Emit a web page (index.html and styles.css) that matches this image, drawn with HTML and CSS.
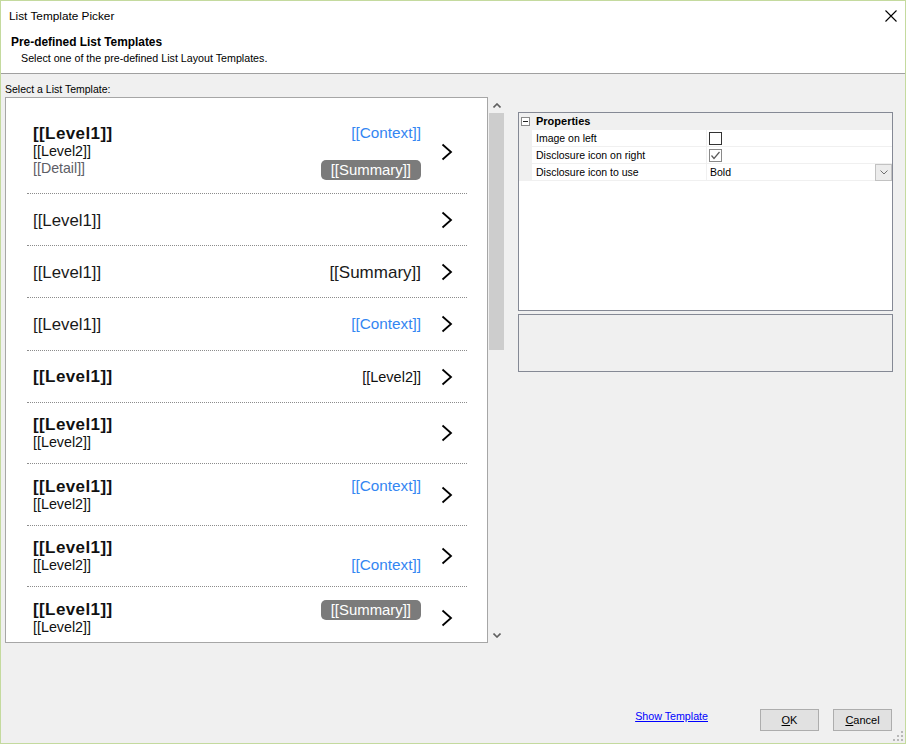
FILE: index.html
```html
<!DOCTYPE html>
<html>
<head>
<meta charset="utf-8">
<title>List Template Picker</title>
<link rel="stylesheet" href="styles.css">
</head>
<body>
<div class="window">
  <div class="top">
    <div class="titlebar">
      <span class="title">List Template Picker</span>
      <svg class="close" width="12" height="12" viewBox="0 0 12 12"><path d="M0.5 0.5 L11.5 11.5 M11.5 0.5 L0.5 11.5" stroke="#000" stroke-width="1.1" fill="none"/></svg>
    </div>
    <div class="header">
      <div class="h-title">Pre-defined List Templates</div>
      <div class="h-sub">Select one of the pre-defined List Layout Templates.</div>
    </div>
  </div>

  <div class="main">
    <div class="left-pane">
      <div class="label">Select a List Template:</div>
      <div class="list-wrap">
        <div class="listbox">
          <div class="item h83">
            <div class="body">
              <div class="left">
                <div class="l1b">[[Level1]]</div>
                <div class="l2">[[Level2]]</div>
                <div class="detail">[[Detail]]</div>
              </div>
              <div class="right gap">
                <div class="ctx">[[Context]]</div>
                <div class="pill">[[Summary]]</div>
              </div>
            </div>
            <svg class="chev" width="12" height="18" viewBox="0 0 12 18"><polyline points="1.5,1.5 10,9 1.5,16.5" fill="none" stroke="#000" stroke-width="1.8"/></svg>
          </div>

          <div class="item h51">
            <div class="body"><div class="left"><div class="l1 lower">[[Level1]]</div></div></div>
            <svg class="chev" width="12" height="18" viewBox="0 0 12 18"><polyline points="1.5,1.5 10,9 1.5,16.5" fill="none" stroke="#000" stroke-width="1.8"/></svg>
          </div>

          <div class="item h51">
            <div class="body">
              <div class="left"><div class="l1 lower">[[Level1]]</div></div>
              <div class="right mid"><div class="sum lower">[[Summary]]</div></div>
            </div>
            <svg class="chev" width="12" height="18" viewBox="0 0 12 18"><polyline points="1.5,1.5 10,9 1.5,16.5" fill="none" stroke="#000" stroke-width="1.8"/></svg>
          </div>

          <div class="item h52">
            <div class="body">
              <div class="left"><div class="l1 lower">[[Level1]]</div></div>
              <div class="right mid"><div class="ctx">[[Context]]</div></div>
            </div>
            <svg class="chev" width="12" height="18" viewBox="0 0 12 18"><polyline points="1.5,1.5 10,9 1.5,16.5" fill="none" stroke="#000" stroke-width="1.8"/></svg>
          </div>

          <div class="item h51">
            <div class="body">
              <div class="left"><div class="l1b">[[Level1]]</div></div>
              <div class="right mid"><div class="l2r">[[Level2]]</div></div>
            </div>
            <svg class="chev" width="12" height="18" viewBox="0 0 12 18"><polyline points="1.5,1.5 10,9 1.5,16.5" fill="none" stroke="#000" stroke-width="1.8"/></svg>
          </div>

          <div class="item h60">
            <div class="body">
              <div class="left"><div class="l1b">[[Level1]]</div><div class="l2">[[Level2]]</div></div>
            </div>
            <svg class="chev" width="12" height="18" viewBox="0 0 12 18"><polyline points="1.5,1.5 10,9 1.5,16.5" fill="none" stroke="#000" stroke-width="1.8"/></svg>
          </div>

          <div class="item h61">
            <div class="body">
              <div class="left"><div class="l1b">[[Level1]]</div><div class="l2">[[Level2]]</div></div>
              <div class="right start"><div class="ctx">[[Context]]</div></div>
            </div>
            <svg class="chev" width="12" height="18" viewBox="0 0 12 18"><polyline points="1.5,1.5 10,9 1.5,16.5" fill="none" stroke="#000" stroke-width="1.8"/></svg>
          </div>

          <div class="item h60">
            <div class="body">
              <div class="left"><div class="l1b">[[Level1]]</div><div class="l2">[[Level2]]</div></div>
              <div class="right end"><div class="ctx">[[Context]]</div></div>
            </div>
            <svg class="chev" width="12" height="18" viewBox="0 0 12 18"><polyline points="1.5,1.5 10,9 1.5,16.5" fill="none" stroke="#000" stroke-width="1.8"/></svg>
          </div>

          <div class="item h60 last">
            <div class="body">
              <div class="left"><div class="l1b">[[Level1]]</div><div class="l2">[[Level2]]</div></div>
              <div class="right start"><div class="pill">[[Summary]]</div></div>
            </div>
            <svg class="chev" width="12" height="18" viewBox="0 0 12 18"><polyline points="1.5,1.5 10,9 1.5,16.5" fill="none" stroke="#000" stroke-width="1.8"/></svg>
          </div>
        </div>

        <div class="scrollbar">
          <div class="sb-btn"><svg width="8" height="5" viewBox="0 0 8 5"><polyline points="0.5,4.5 4,1 7.5,4.5" fill="none" stroke="#606060" stroke-width="1.6"/></svg></div>
          <div class="thumb"></div>
          <div class="sb-space"></div>
          <div class="sb-btn"><svg width="8" height="5" viewBox="0 0 8 5"><polyline points="0.5,0.5 4,4 7.5,0.5" fill="none" stroke="#606060" stroke-width="1.6"/></svg></div>
        </div>
      </div>
    </div>

    <div class="right-pane">
      <div class="pgrid">
        <div class="pg-cat">
          <div class="pg-gutter"><span class="minus"></span></div>
          <div class="pg-catname">Properties</div>
        </div>
        <div class="pg-row">
          <div class="pg-gutter"></div>
          <div class="pg-name">Image on left</div>
          <div class="pg-val"><span class="cb"></span></div>
        </div>
        <div class="pg-row">
          <div class="pg-gutter"></div>
          <div class="pg-name">Disclosure icon on right</div>
          <div class="pg-val"><span class="cb checked"><svg width="11" height="11" viewBox="0 0 11 11"><polyline points="1.5,5.5 4,8.5 9.5,2" fill="none" stroke="#5a5a5a" stroke-width="1.2"/></svg></span></div>
        </div>
        <div class="pg-row">
          <div class="pg-gutter"></div>
          <div class="pg-name">Disclosure icon to use</div>
          <div class="pg-val text"><span class="val-text">Bold</span><span class="dd"><svg width="8" height="5" viewBox="0 0 8 5"><polyline points="0.5,0.5 4,4 7.5,0.5" fill="none" stroke="#707070" stroke-width="1"/></svg></span></div>
        </div>
      </div>
      <div class="desc"></div>
    </div>
  </div>

  <div class="footer">
    <a class="link" href="#">Show Template</a>
    <button class="btn ok"><u>O</u>K</button>
    <button class="btn cancel"><u>C</u>ancel</button>
  </div>

  <svg class="grip" width="10" height="10" viewBox="0 0 10 10">
    <rect x="8" y="0" width="2" height="2" fill="#b8b8b8"/>
    <rect x="4" y="4" width="2" height="2" fill="#b8b8b8"/>
    <rect x="8" y="4" width="2" height="2" fill="#b8b8b8"/>
    <rect x="0" y="8" width="2" height="2" fill="#b8b8b8"/>
    <rect x="4" y="8" width="2" height="2" fill="#b8b8b8"/>
    <rect x="8" y="8" width="2" height="2" fill="#b8b8b8"/>
  </svg>
</div>
</body>
</html>
```

FILE: styles.css
```css
* { box-sizing: border-box; }

html, body {
  margin: 0;
  padding: 0;
  background: #f0f0f0;
  font-family: "Liberation Sans", Arial, sans-serif;
  color: #000;
}

.window {
  position: relative;
  width: 906px;
  height: 744px;
  border: 1px solid #c4da9e;
  background: #f0f0f0;
  display: flex;
  flex-direction: column;
  overflow: hidden;
}

/* top white area */
.top {
  background: #fff;
  height: 73px;
  border-bottom: 1px solid #a0a0a0;
  flex: none;
}

.titlebar {
  height: 31px;
  display: flex;
  align-items: center;
  justify-content: space-between;
  padding-left: 8px;
  padding-right: 8px;
}

.title {
  font-size: 11.8px;
  line-height: 31px;
}

.close {
  display: block;
  margin-top: -2px;
}

.header {
  padding: 3px 0 0 10px;
}

.h-title {
  font-size: 11.9px;
  font-weight: bold;
  line-height: 15px;
}

.h-sub {
  font-size: 10.7px;
  line-height: 16px;
  padding-left: 10px;
}

/* main */
.main {
  display: flex;
  flex: none;
}

.left-pane {
  margin-left: 4px;
  display: flex;
  flex-direction: column;
}

.label {
  font-size: 10.5px;
  padding-top: 8px;
  line-height: 15px;
}

.list-wrap {
  display: flex;
}

.listbox {
  width: 483px;
  height: 546px;
  border: 1px solid #a6a6a6;
  background: #fff;
  padding: 12px 20px 0 21px;
  overflow: hidden;
}

.item {
  display: flex;
  align-items: center;
  padding-left: 6px;
  border-bottom: 1px dotted #8c8c8c;
}

.item.last { border-bottom: none; }

.h83 { height: 84px; }
.h51 { height: 52px; }
.h52 { height: 53px; }
.h60 { height: 61px; }
.h61 { height: 62px; }

.body {
  flex: 1;
  display: flex;
  align-items: stretch;
}

.left {
  flex: 1;
}

.right {
  display: flex;
  flex-direction: column;
  align-items: flex-end;
}

.right.gap { gap: 18px; }
.right.mid { justify-content: center; }
.right.start { justify-content: flex-start; }
.right.end { justify-content: flex-end; }

.lower { padding-top: 2px; }

.l1b {
  font-size: 17px;
  font-weight: bold;
  letter-spacing: 0.4px;
  line-height: 19px;
  color: #111;
}

.l1 {
  font-size: 16.8px;
  line-height: 20px;
  color: #1a1a1a;
}

.l2 {
  font-size: 14.3px;
  line-height: 17px;
  color: #111;
}

.l2r {
  font-size: 14.5px;
  line-height: 18px;
  color: #111;
}

.detail {
  font-size: 14.2px;
  line-height: 17px;
  color: #5e5e66;
}

.ctx {
  font-size: 15.3px;
  line-height: 18px;
  color: #3486f2;
}

.sum {
  font-size: 17px;
  line-height: 20px;
  color: #1a1a1a;
}

.pill {
  background: #7b7b7b;
  color: #fff;
  font-size: 14.9px;
  line-height: 20px;
  height: 20px;
  padding: 0 10px;
  border-radius: 5px;
}

.chev {
  display: block;
  flex: none;
  margin-left: 20px;
  margin-right: 14px;
}

/* scrollbar */
.scrollbar {
  width: 18px;
  height: 546px;
  display: flex;
  flex-direction: column;
  align-items: center;
}

.sb-btn {
  height: 16px;
  width: 18px;
  display: flex;
  align-items: center;
  justify-content: center;
}

.sb-btn svg { display: block; }

.thumb {
  width: 15px;
  height: 237px;
  background: #cdcdcd;
  margin-left: 1px;
  margin-right: 2px;
}

.sb-space { flex: 1; }

/* right pane */
.right-pane {
  margin-left: 12px;
  margin-top: 38px;
  width: 375px;
}

.pgrid {
  height: 199px;
  border: 1px solid #858995;
  background: #fff;
}

.pg-cat {
  display: flex;
  height: 17px;
  background: #f0f0f0;
  align-items: center;
}

.pg-gutter {
  width: 13px;
  height: 100%;
  background: #f0f0f0;
  display: flex;
  align-items: center;
  padding-left: 2px;
}

.minus {
  position: relative;
  display: block;
  width: 9px;
  height: 9px;
  border: 1px solid #8a8a8a;
  background: #fff;
}

.minus::after {
  content: "";
  position: absolute;
  left: 1px;
  top: 3px;
  width: 5px;
  height: 1px;
  background: #222;
}

.pg-catname {
  font-size: 11px;
  font-weight: bold;
  padding-left: 4px;
  line-height: 17px;
}

.pg-row {
  display: flex;
  height: 17px;
  border-bottom: 1px solid #f0f0f0;
}

.pg-name {
  width: 175px;
  border-right: 1px solid #f0f0f0;
  font-size: 10.5px;
  line-height: 16px;
  padding-left: 4px;
}

.pg-val {
  flex: 1;
  padding-left: 2px;
  padding-top: 2px;
}

.pg-val.text {
  padding: 0 0 0 3px;
  display: flex;
  justify-content: space-between;
}

.val-text {
  font-size: 10.5px;
  line-height: 16px;
}

.cb {
  display: block;
  width: 13px;
  height: 13px;
  border: 1px solid #333;
  background: #fff;
}

.cb.checked {
  border-color: #8a8a8a;
}

.cb svg { display: block; }

.dd {
  width: 17px;
  height: 17px;
  background: #ececec;
  border: 1px solid #c2c2c2;
  display: flex;
  align-items: center;
  justify-content: center;
}

.dd svg { display: block; }

.desc {
  margin-top: 3px;
  height: 58px;
  border: 1px solid #858995;
  background: #f0f0f0;
}

/* footer */
.footer {
  margin-top: auto;
  display: flex;
  justify-content: flex-end;
  align-items: flex-start;
  padding-right: 13px;
  padding-bottom: 12px;
}

.link {
  font-size: 10.7px;
  line-height: 15px;
  color: #0000ff;
  text-decoration: underline;
  margin-right: 52px;
}

.btn {
  width: 59px;
  height: 22px;
  background: #e1e1e1;
  border: 1px solid #adadad;
  font-family: "Liberation Sans", Arial, sans-serif;
  font-size: 11px;
  color: #000;
  padding: 0;
  margin: 0;
}

.btn.ok { margin-right: 14px; }

.grip {
  position: absolute;
  right: 2px;
  bottom: 2px;
}
```
